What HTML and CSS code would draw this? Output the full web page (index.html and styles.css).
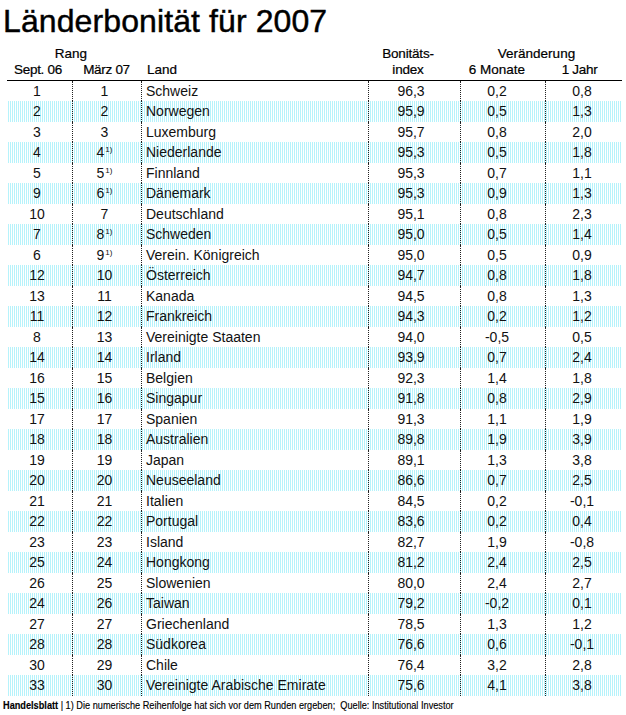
FILE: index.html
```html
<!DOCTYPE html>
<html lang="de">
<head>
<meta charset="utf-8">
<title>Länderbonität für 2007</title>
<link rel="stylesheet" href="styles.css">
</head>
<body>
<h1 class="title">Länderbonität für 2007</h1>
<div class="chart">
  <div class="head">
    <div class="h-rang">Rang</div>
    <div class="h-boni">Bonitäts-<br>index</div>
    <div class="h-ver">Veränderung</div>
    <div class="h-sept">Sept. 06</div>
    <div class="h-maerz">März 07</div>
    <div class="h-land">Land</div>
    <div class="h-6m">6 Monate</div>
    <div class="h-1j">1 Jahr</div>
  </div>
  <div class="body">
    <div class="row"><span class="c1">1</span><span class="c2">1</span><span class="c3">Schweiz</span><span class="c4">96,3</span><span class="c5">0,2</span><span class="c6">0,8</span></div>
    <div class="row alt"><span class="c1">2</span><span class="c2">2</span><span class="c3">Norwegen</span><span class="c4">95,9</span><span class="c5">0,5</span><span class="c6">1,3</span></div>
    <div class="row"><span class="c1">3</span><span class="c2">3</span><span class="c3">Luxemburg</span><span class="c4">95,7</span><span class="c5">0,8</span><span class="c6">2,0</span></div>
    <div class="row alt"><span class="c1">4</span><span class="c2">4<sup class="fn">1)</sup></span><span class="c3">Niederlande</span><span class="c4">95,3</span><span class="c5">0,5</span><span class="c6">1,8</span></div>
    <div class="row"><span class="c1">5</span><span class="c2">5<sup class="fn">1)</sup></span><span class="c3">Finnland</span><span class="c4">95,3</span><span class="c5">0,7</span><span class="c6">1,1</span></div>
    <div class="row alt"><span class="c1">9</span><span class="c2">6<sup class="fn">1)</sup></span><span class="c3">Dänemark</span><span class="c4">95,3</span><span class="c5">0,9</span><span class="c6">1,3</span></div>
    <div class="row"><span class="c1">10</span><span class="c2">7</span><span class="c3">Deutschland</span><span class="c4">95,1</span><span class="c5">0,8</span><span class="c6">2,3</span></div>
    <div class="row alt"><span class="c1">7</span><span class="c2">8<sup class="fn">1)</sup></span><span class="c3">Schweden</span><span class="c4">95,0</span><span class="c5">0,5</span><span class="c6">1,4</span></div>
    <div class="row"><span class="c1">6</span><span class="c2">9<sup class="fn">1)</sup></span><span class="c3">Verein. Königreich</span><span class="c4">95,0</span><span class="c5">0,5</span><span class="c6">0,9</span></div>
    <div class="row alt"><span class="c1">12</span><span class="c2">10</span><span class="c3">Österreich</span><span class="c4">94,7</span><span class="c5">0,8</span><span class="c6">1,8</span></div>
    <div class="row"><span class="c1">13</span><span class="c2">11</span><span class="c3">Kanada</span><span class="c4">94,5</span><span class="c5">0,8</span><span class="c6">1,3</span></div>
    <div class="row alt"><span class="c1">11</span><span class="c2">12</span><span class="c3">Frankreich</span><span class="c4">94,3</span><span class="c5">0,2</span><span class="c6">1,2</span></div>
    <div class="row"><span class="c1">8</span><span class="c2">13</span><span class="c3">Vereinigte Staaten</span><span class="c4">94,0</span><span class="c5">-0,5</span><span class="c6">0,5</span></div>
    <div class="row alt"><span class="c1">14</span><span class="c2">14</span><span class="c3">Irland</span><span class="c4">93,9</span><span class="c5">0,7</span><span class="c6">2,4</span></div>
    <div class="row"><span class="c1">16</span><span class="c2">15</span><span class="c3">Belgien</span><span class="c4">92,3</span><span class="c5">1,4</span><span class="c6">1,8</span></div>
    <div class="row alt"><span class="c1">15</span><span class="c2">16</span><span class="c3">Singapur</span><span class="c4">91,8</span><span class="c5">0,8</span><span class="c6">2,9</span></div>
    <div class="row"><span class="c1">17</span><span class="c2">17</span><span class="c3">Spanien</span><span class="c4">91,3</span><span class="c5">1,1</span><span class="c6">1,9</span></div>
    <div class="row alt"><span class="c1">18</span><span class="c2">18</span><span class="c3">Australien</span><span class="c4">89,8</span><span class="c5">1,9</span><span class="c6">3,9</span></div>
    <div class="row"><span class="c1">19</span><span class="c2">19</span><span class="c3">Japan</span><span class="c4">89,1</span><span class="c5">1,3</span><span class="c6">3,8</span></div>
    <div class="row alt"><span class="c1">20</span><span class="c2">20</span><span class="c3">Neuseeland</span><span class="c4">86,6</span><span class="c5">0,7</span><span class="c6">2,5</span></div>
    <div class="row"><span class="c1">21</span><span class="c2">21</span><span class="c3">Italien</span><span class="c4">84,5</span><span class="c5">0,2</span><span class="c6">-0,1</span></div>
    <div class="row alt"><span class="c1">22</span><span class="c2">22</span><span class="c3">Portugal</span><span class="c4">83,6</span><span class="c5">0,2</span><span class="c6">0,4</span></div>
    <div class="row"><span class="c1">23</span><span class="c2">23</span><span class="c3">Island</span><span class="c4">82,7</span><span class="c5">1,9</span><span class="c6">-0,8</span></div>
    <div class="row alt"><span class="c1">25</span><span class="c2">24</span><span class="c3">Hongkong</span><span class="c4">81,2</span><span class="c5">2,4</span><span class="c6">2,5</span></div>
    <div class="row"><span class="c1">26</span><span class="c2">25</span><span class="c3">Slowenien</span><span class="c4">80,0</span><span class="c5">2,4</span><span class="c6">2,7</span></div>
    <div class="row alt"><span class="c1">24</span><span class="c2">26</span><span class="c3">Taiwan</span><span class="c4">79,2</span><span class="c5">-0,2</span><span class="c6">0,1</span></div>
    <div class="row"><span class="c1">27</span><span class="c2">27</span><span class="c3">Griechenland</span><span class="c4">78,5</span><span class="c5">1,3</span><span class="c6">1,2</span></div>
    <div class="row alt"><span class="c1">28</span><span class="c2">28</span><span class="c3">Südkorea</span><span class="c4">76,6</span><span class="c5">0,6</span><span class="c6">-0,1</span></div>
    <div class="row"><span class="c1">30</span><span class="c2">29</span><span class="c3">Chile</span><span class="c4">76,4</span><span class="c5">3,2</span><span class="c6">2,8</span></div>
    <div class="row alt"><span class="c1">33</span><span class="c2">30</span><span class="c3">Vereinigte Arabische Emirate</span><span class="c4">75,6</span><span class="c5">4,1</span><span class="c6">3,8</span></div>
  </div>
</div>
<p class="footer"><span class="footer-in"><b class="brand">Handelsblatt</b> | 1) Die numerische Reihenfolge hat sich vor dem Runden ergeben;&nbsp; Quelle: Institutional Investor</span></p>
</body>
</html>
```
FILE: styles.css
```css
html, body {
  margin: 0;
  padding: 0;
  background: #fff;
}
body {
  width: 626px;
  height: 715px;
  overflow: hidden;
  font-family: "Liberation Sans", Arial, sans-serif;
  color: #111;
}
.title {
  margin: 0;
  padding: 2px 0 0 3px;
  height: 38px;
  font-size: 32px;
  line-height: 38px;
  font-weight: normal;
  color: #000;
  letter-spacing: 0.1px;
  -webkit-text-stroke: 0.45px #000;
}
.chart {
  margin: 6px 0 0 8px;
  width: 614px;
}
.head {
  display: grid;
  grid-template-columns: 64px 69px 227px 92px 85px 77px;
  grid-template-rows: 16px 16px;
  font-size: 13.5px;
  line-height: 16px;
  padding-bottom: 1.5px;
  border-bottom: 1px solid #000;
  margin-left: -1px;
  padding-left: 1px;
  color: #000;
  -webkit-text-stroke: 0.2px #000;
}
.head > div { white-space: nowrap; }
.h-rang { grid-column: 1 / 3; grid-row: 1; text-align: center; padding-right: 7px; }
.h-boni { grid-column: 4; grid-row: 1 / 3; text-align: center; padding-right: 12px; letter-spacing: -0.2px; }
.h-ver { grid-column: 5 / 7; grid-row: 1; text-align: center; padding-right: 9px; }
.h-sept { grid-column: 1; grid-row: 2; text-align: center; padding-right: 4px; letter-spacing: -0.3px; }
.h-maerz { grid-column: 2; grid-row: 2; text-align: center; letter-spacing: -0.3px; }
.h-land { grid-column: 3; grid-row: 2; padding-left: 6px; }
.h-6m { grid-column: 5; grid-row: 2; text-align: center; padding-right: 11px; }
.h-1j { grid-column: 6; grid-row: 2; text-align: center; padding-right: 8px; letter-spacing: -0.3px; }

.body {
  font-size: 14px;
}
.row {
  display: grid;
  grid-template-columns: 64px 69px 227px 92px 85px 77px;
  height: 20.5px;
  line-height: 20.5px;
}
.row.alt {
  background: repeating-linear-gradient(90deg, #b6f3fb 0 1px, #ffffff 1px 2px);
}
.row > span {
  white-space: nowrap;
  text-align: center;
}
.row > span + span {
  border-left: 1px dotted #222;
}
.c1 { padding-right: 6px; }
.c2 { padding-right: 5px; }
.row > .c3 { text-align: left; padding-left: 4px; }
.c4 { padding-right: 7px; }
.c5 { padding-right: 12px; }
.c6 { padding-right: 4px; }
.fn {
  font-size: 8px;
  line-height: 0;
  vertical-align: 5px;
  margin-left: 1px;
}
.footer {
  margin: 2px 0 0 3px;
  font-size: 11px;
  line-height: 14px;
  color: #000;
  white-space: nowrap;
}
.footer-in {
  display: inline-block;
  transform: scaleX(0.835);
  transform-origin: left center;
  -webkit-text-stroke: 0.15px #000;
}
.brand {
  font-weight: bold;
}
```
